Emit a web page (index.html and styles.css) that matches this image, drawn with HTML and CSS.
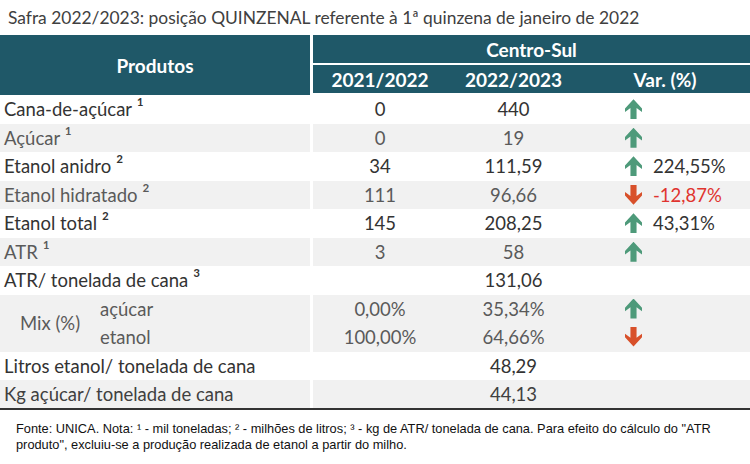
FILE: index.html
```html
<!DOCTYPE html>
<html lang="pt">
<head>
<meta charset="utf-8">
<link rel="stylesheet" href="styles.css">
</head>
<body>
<div class="title">Safra 2022/2023: posição QUINZENAL referente à 1ª quinzena de janeiro de 2022</div>
<div class="table">
  <div class="head">
    <div class="h-left">Produtos</div>
    <div class="h-right">
      <div class="h-region">Centro-Sul</div>
      <div class="h-sub">
        <div class="c1">2021/2022</div>
        <div class="c2">2022/2023</div>
        <div class="c3">Var. (%)</div>
      </div>
    </div>
  </div>

  <div class="row">
    <div class="name">Cana-de-açúcar <span class="s">¹</span></div>
    <div class="vals"><div class="c1">0</div><div class="c2">440</div><div class="c3"><span class="arrow up"></span></div></div>
  </div>
  <div class="row gray light">
    <div class="name">Açúcar <span class="s">¹</span></div>
    <div class="vals"><div class="c1">0</div><div class="c2">19</div><div class="c3"><span class="arrow up"></span></div></div>
  </div>
  <div class="row">
    <div class="name">Etanol anidro <span class="s">²</span></div>
    <div class="vals"><div class="c1">34</div><div class="c2">111,59</div><div class="c3"><span class="arrow up"></span><span class="pct">224,55%</span></div></div>
  </div>
  <div class="row gray light">
    <div class="name">Etanol hidratado <span class="s">²</span></div>
    <div class="vals"><div class="c1">111</div><div class="c2">96,66</div><div class="c3"><span class="arrow down"></span><span class="pct neg">-12,87%</span></div></div>
  </div>
  <div class="row">
    <div class="name">Etanol total <span class="s">²</span></div>
    <div class="vals"><div class="c1">145</div><div class="c2">208,25</div><div class="c3"><span class="arrow up"></span><span class="pct">43,31%</span></div></div>
  </div>
  <div class="row gray light">
    <div class="name">ATR <span class="s">¹</span></div>
    <div class="vals"><div class="c1">3</div><div class="c2">58</div><div class="c3"><span class="arrow up"></span></div></div>
  </div>
  <div class="row">
    <div class="name">ATR/ tonelada de cana <span class="s">³</span></div>
    <div class="vals"><div class="c1"></div><div class="c2">131,06</div><div class="c3"></div></div>
  </div>
  <div class="row gray mix light">
    <div class="name mixname">
      <span class="mixlabel">Mix (%)</span>
      <span class="mixsubs"><span>açúcar</span><span>etanol</span></span>
    </div>
    <div class="vals mixvals">
      <div class="subrow"><div class="c1">0,00%</div><div class="c2">35,34%</div><div class="c3"><span class="arrow up"></span></div></div>
      <div class="subrow"><div class="c1">100,00%</div><div class="c2">64,66%</div><div class="c3"><span class="arrow down"></span></div></div>
    </div>
  </div>
  <div class="row">
    <div class="name">Litros etanol/ tonelada de cana</div>
    <div class="vals"><div class="c1"></div><div class="c2">48,29</div><div class="c3"></div></div>
  </div>
  <div class="row gray last">
    <div class="name">Kg açúcar/ tonelada de cana</div>
    <div class="vals"><div class="c1"></div><div class="c2">44,13</div><div class="c3"></div></div>
  </div>
</div>
<p class="note">Fonte: UNICA. Nota: ¹ - mil toneladas; ² - milhões de litros; ³ - kg de ATR/ tonelada de cana. Para efeito do cálculo do "ATR produto", excluiu-se a produção realizada de etanol a partir do milho.</p>
</body>
</html>
```
FILE: styles.css
```css
* { box-sizing: border-box; }
body {
  margin: 0;
  background: #fff;
  font-family: Lato, "Open Sans", sans-serif;
  color: #333;
}
.title {
  font-size: 17.4px;
  color: #404040;
  padding: 7px 0 0 8px;
  height: 35px;
  line-height: 22px;
}
.table { width: 750px; }
.head { display: flex; height: 60px; }
.h-left {
  width: 310px;
  background: #1f5868;
  color: #fff;
  font-weight: bold;
  font-size: 19px;
  display: flex;
  align-items: center;
  justify-content: center;
}
.h-right {
  flex: 1;
  margin-left: 3px;
  display: flex;
  flex-direction: column;
  gap: 2px;
}
.h-region, .h-sub {
  background: #1f5868;
  color: #fff;
  font-weight: bold;
  font-size: 19px;
  height: 28px;
  display: flex;
  align-items: center;
}
.h-region { justify-content: center; }
.c1 { width: 134px; text-align: center; }
.c2 { width: 133px; text-align: center; }
.c3 { flex: 1; text-align: center; }
.row {
  display: flex;
  height: 28.5px;
  font-size: 18.5px;
  line-height: 28px;
}
.row .name {
  width: 310px;
  padding-left: 4px;
  white-space: nowrap;
}
.s { font-size: 22px; line-height: 0; }
.row .vals {
  flex: 1;
  margin-left: 3px;
  display: flex;
}
.row.light { color: #5a5a5a; }
.row.gray .name, .row.gray .vals { background: #f1f1f1; }
.row .c3 {
  text-align: left;
  padding-left: 45px;
  display: flex;
  align-items: center;
  gap: 11px;
}
.pct { color: #333; }
.pct.neg { color: #e0342f; }
.arrow {
  display: inline-block;
  width: 17px;
  height: 20px;
}
.arrow.up {
  clip-path: polygon(50% 0, 100% 46%, 100% 64%, 68% 44%, 68% 100%, 32% 100%, 32% 44%, 0 64%, 0 46%);
  background: #4e9a7a;
}
.arrow.down {
  clip-path: polygon(50% 100%, 100% 54%, 100% 36%, 68% 56%, 68% 0, 32% 0, 32% 56%, 0 36%, 0 54%);
  background: #d8502a;
}
.row.mix { height: 57px; }
.mixname { display: flex; align-items: center; }
.mixlabel { margin-left: 16px; width: 80px; }
.mixsubs { display: flex; flex-direction: column; line-height: 28px; }
.mixvals { flex-direction: column; }
.subrow { display: flex; height: 28px; }
.row.last { border-bottom: 2px solid #333; height: 30px; color: #404040; }
.note {
  margin: 11px 0 0 16px;
  font-family: "Liberation Sans", Arial, sans-serif;
  font-size: 12.8px;
  line-height: 16px;
  color: #111;
  width: 720px;
}
```
